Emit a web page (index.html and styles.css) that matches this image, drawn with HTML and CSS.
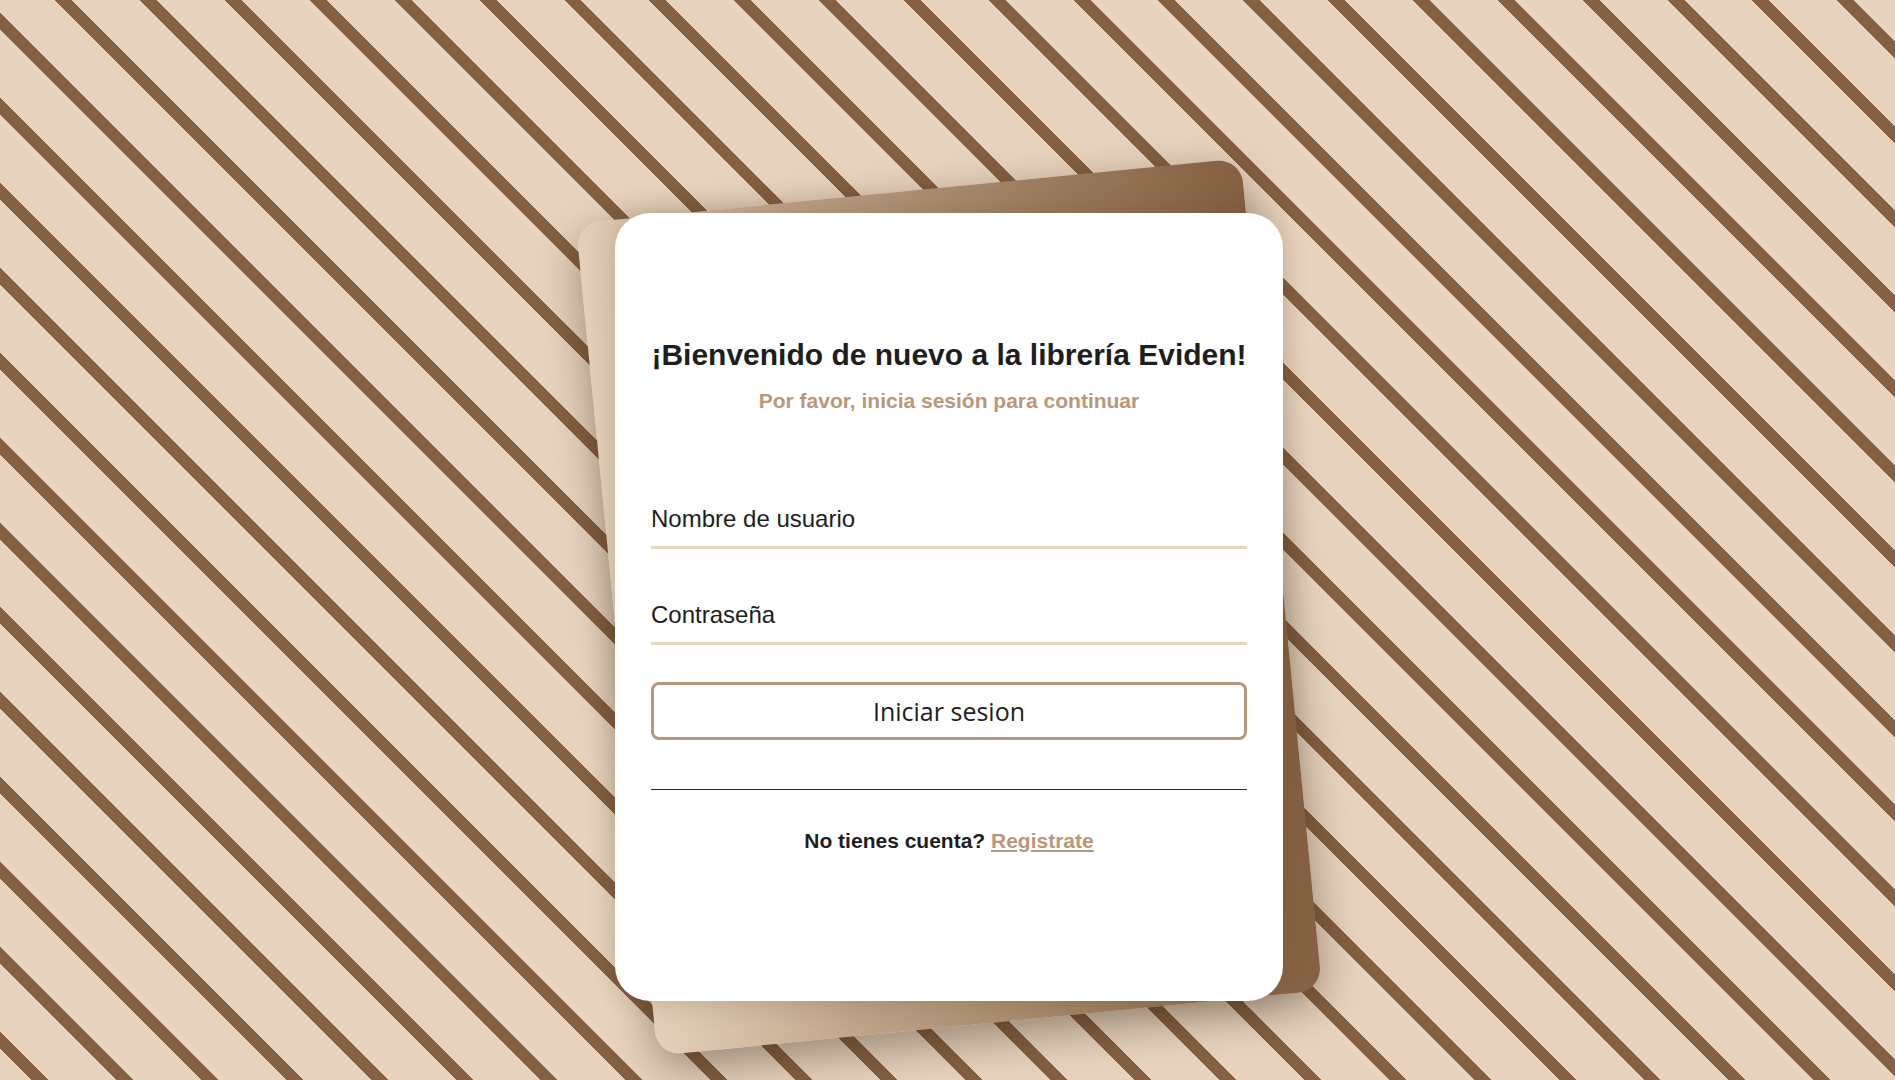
FILE: index.html
```html
<!DOCTYPE html>
<html lang="es">
<head>
<meta charset="utf-8">
<title>Librería Eviden - Iniciar sesión</title>
<link rel="stylesheet" href="styles.css">
</head>
<body>
<main class="scene">
  <div class="card-wrap">
    <div class="card-back"></div>
    <form class="card">
      <h1 class="title">¡Bienvenido de nuevo a la librería Eviden!</h1>
      <p class="subtitle">Por favor, inicia sesión para continuar</p>
      <input class="field field-user" type="text" placeholder="Nombre de usuario">
      <input class="field field-pass" type="password" placeholder="Contraseña">
      <button class="btn" type="button">Iniciar sesion</button>
      <hr class="divider">
      <p class="footer">No tienes cuenta? <a class="link" href="#">Registrate</a></p>
    </form>
  </div>
</main>
</body>
</html>
```

FILE: styles.css
```css
html, body {
  margin: 0;
  padding: 0;
  height: 100%;
  overflow: hidden;
}

.scene {
  width: 100%;
  height: 100vh;
  box-sizing: border-box;
  padding-top: 213px;
  display: flex;
  justify-content: center;
  align-items: flex-start;
  background: repeating-linear-gradient(45deg,
    #e8d4be 0 22.5px,
    #856042 22.5px 34.5px,
    #e8d4be 34.5px 60px);
  font-family: "Liberation Sans", Arial, sans-serif;
}

.card-wrap {
  position: relative;
  width: 668px;
  height: 788px;
  margin-left: 3px;
}

.card-back {
  position: absolute;
  top: -24px;
  bottom: -24px;
  left: 0;
  right: 0;
  border-radius: 24px;
  transform: rotate(-5.6deg);
  background: linear-gradient(to right, #e4d0ba 0%, #bea286 32%, #9e7e60 68%, #856042 100%);
  box-shadow: 0 14px 45px rgba(40, 25, 10, 0.42);
}

.card {
  position: relative;
  box-sizing: border-box;
  width: 668px;
  height: 788px;
  padding: 0 36px;
  margin: 0;
  background: #ffffff;
  border-radius: 35px;
  box-shadow: 0 0 28px rgba(60, 40, 20, 0.2);
  display: flex;
  flex-direction: column;
}

.title {
  margin: 123.6px 0 0;
  font-size: 30px;
  line-height: 36px;
  font-weight: 700;
  color: #1e1e1e;
  text-align: center;
  white-space: nowrap;
}

.subtitle {
  margin: 16px 0 0;
  font-size: 21px;
  line-height: 24px;
  font-weight: 700;
  color: #b8987a;
  text-align: center;
}

.field {
  display: block;
  box-sizing: border-box;
  width: 100%;
  height: 58px;
  padding: 0;
  border: 0;
  border-bottom: 3px solid #e8d4be;
  outline: none;
  background: transparent;
  font-family: "Liberation Sans", Arial, sans-serif;
  font-size: 24px;
  color: #1e1e1e;
}

.field::placeholder {
  color: #1e1e1e;
  opacity: 1;
}

.field-user {
  margin-top: 78.5px;
}

.field-pass {
  margin-top: 38px;
}

.btn {
  margin-top: 37px;
  box-sizing: border-box;
  width: 100%;
  height: 58px;
  border: 3px solid #b8977a;
  border-radius: 8px;
  background: #ffffff;
  font-family: "Open Sans", "Noto Sans", sans-serif;
  font-size: 25px;
  font-weight: 400;
  color: #1e1e1e;
  cursor: pointer;
}

.divider {
  margin: 49px 0 0;
  border: 0;
  height: 1px;
  background: #2a2a2a;
}

.footer {
  margin: 38.7px 0 0;
  font-size: 21px;
  line-height: 24px;
  font-weight: 700;
  color: #1e1e1e;
  text-align: center;
}

.link {
  color: #b8977a;
  text-decoration: underline;
}
```
